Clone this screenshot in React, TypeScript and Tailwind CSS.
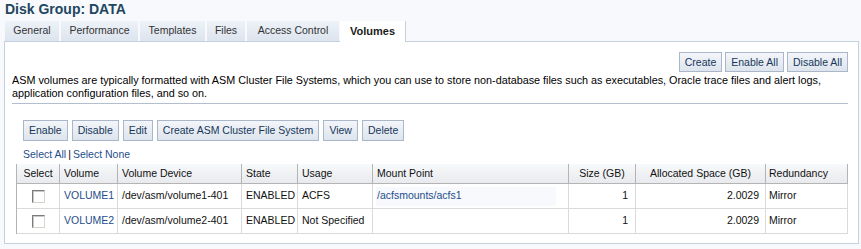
const tabs = [
  { label: 'General', w: 'w-[54px]' },
  { label: 'Performance', w: 'w-[77px]' },
  { label: 'Templates', w: 'w-[65px]' },
  { label: 'Files', w: 'w-[38px]' },
  { label: 'Access Control', w: 'w-[92px]' },
];

const rows = [
  { name: 'VOLUME1', device: '/dev/asm/volume1-401', state: 'ENABLED', usage: 'ACFS', mount: '/acfsmounts/acfs1', size: '1', alloc: '2.0029', red: 'Mirror' },
  { name: 'VOLUME2', device: '/dev/asm/volume2-401', state: 'ENABLED', usage: 'Not Specified', mount: '', size: '1', alloc: '2.0029', red: 'Mirror' },
];

const Btn = ({ children, h = 'h-[20px]' }: { children: React.ReactNode; h?: string }) => (
  <button
    className={`${h} px-[5px] border border-[#aab7c8] bg-linear-to-b from-[#f3f6fa] to-[#dde4ed] text-[#17375a] leading-none cursor-pointer`}
  >
    {children}
  </button>
);

const Checkbox = () => (
  <div className="w-[13px] h-[13px] border border-t-[#7b7b7b] border-l-[#7b7b7b] border-r-[#d6d3cc] border-b-[#d6d3cc] bg-white shadow-[inset_1px_1px_0_#c9c9c9]" />
);

const th = 'h-[20px] flex items-center border-r border-b border-[#b4b4b4] whitespace-nowrap overflow-hidden';
const td = 'h-[25px] flex items-center border-r border-b border-[#dadada] whitespace-nowrap overflow-hidden';

export default function App() {
  return (
    <div className="w-[861px] h-[249px] bg-[#f8f9fc] text-[10.5px] text-[#111] font-['Liberation_Sans',Arial,sans-serif] overflow-hidden">
      {/* Title */}
      <div className="h-[21px] pt-[1px] pl-[5px] text-[14px] leading-[16px] font-bold text-[#21465f]">
        Disk Group: DATA
      </div>

      {/* Tabs */}
      <div className="flex h-[20px] pl-[5px] gap-[2px]">
        {tabs.map((t) => (
          <div
            key={t.label}
            className={`${t.w} h-full flex items-center justify-center bg-linear-to-b from-[#eef2f8] to-[#dce4ee] text-[#333]`}
          >
            {t.label}
          </div>
        ))}
        <div className="w-[66px] h-[21px] -ml-[1px] relative z-10 flex items-center justify-center bg-white border-r border-[#c5d0df] font-bold text-[11px] text-[#1b1b1b] pb-[1px]">
          Volumes
        </div>
      </div>

      {/* Panel */}
      <div className="ml-[4px] w-[855px] h-[203px] border border-[#c5d0df] bg-white pl-[7px] pr-[10px] pt-[10px]">
        <div className="flex justify-end gap-[3px]">
          <Btn>Create</Btn>
          <Btn>Enable All</Btn>
          <Btn>Disable All</Btn>
        </div>

        <p className="mt-[2px] text-[10.8px] leading-[13px] pb-[3px] border-b border-[#b3bfce] text-black">
          ASM volumes are typically formatted with ASM Cluster File Systems, which you can use to store non-database files such as executables, Oracle trace files and alert logs, application configuration files, and so on.
        </p>

        <div className="mt-[16px] ml-[11px] flex gap-[4px]">
          <Btn h="h-[21px]">Enable</Btn>
          <Btn h="h-[21px]">Disable</Btn>
          <Btn h="h-[21px]">Edit</Btn>
          <Btn h="h-[21px]">Create ASM Cluster File System</Btn>
          <Btn h="h-[21px]">View</Btn>
          <Btn h="h-[21px]">Delete</Btn>
        </div>

        <div className="ml-[11px] mt-[5px] h-[17px] leading-[17px] text-[#1f4e8c]">
          <span>Select All</span>
          <span className="text-black px-[2px]">|</span>
          <span>Select None</span>
        </div>

        <div className="ml-[4px] mt-[1px] w-[831px] grid grid-cols-[43px_58px_124px_56px_75px_196px_67px_130px_82px] border-l border-[#b4b4b4]">
          <div className="contents [&>div]:bg-linear-to-b [&>div]:from-[#f8f9fa] [&>div]:to-[#e8eaee]">
            <div className={`${th} justify-center`}>Select</div>
            <div className={`${th} pl-[4px]`}>Volume</div>
            <div className={`${th} pl-[4px]`}>Volume Device</div>
            <div className={`${th} pl-[4px]`}>State</div>
            <div className={`${th} pl-[4px]`}>Usage</div>
            <div className={`${th} pl-[4px]`}>Mount Point</div>
            <div className={`${th} justify-center`}>Size (GB)</div>
            <div className={`${th} justify-center`}>Allocated Space (GB)</div>
            <div className={`${th} pl-[3px]`}>Redundancy</div>
          </div>
          {rows.map((r, i) => (
            <div key={r.name} className="contents">
              <div className={`${td} justify-center ${i === 0 ? '' : 'h-[24px]'}`}><Checkbox /></div>
              <div className={`${td} pl-[4px] text-[#1f4e8c] ${i === 0 ? '' : 'h-[24px]'}`}>{r.name}</div>
              <div className={`${td} pl-[4px] ${i === 0 ? '' : 'h-[24px]'}`}>{r.device}</div>
              <div className={`${td} pl-[4px] ${i === 0 ? '' : 'h-[24px]'}`}>{r.state}</div>
              <div className={`${td} pl-[4px] ${i === 0 ? '' : 'h-[24px]'}`}>{r.usage}</div>
              <div className={`${td} pl-[3px] ${i === 0 ? '' : 'h-[24px]'}`}>
                {r.mount && (
                  <div className="w-[180px] h-[19px] flex items-center pl-[1px] bg-[#f7f9fc] text-[#1f4e8c]">{r.mount}</div>
                )}
              </div>
              <div className={`${td} justify-end pr-[7px] ${i === 0 ? '' : 'h-[24px]'}`}>{r.size}</div>
              <div className={`${td} justify-end pr-[6px] ${i === 0 ? '' : 'h-[24px]'}`}>{r.alloc}</div>
              <div className={`${td} pl-[3px] ${i === 0 ? '' : 'h-[24px]'}`}>{r.red}</div>
            </div>
          ))}
        </div>
      </div>
    </div>
  );
}
